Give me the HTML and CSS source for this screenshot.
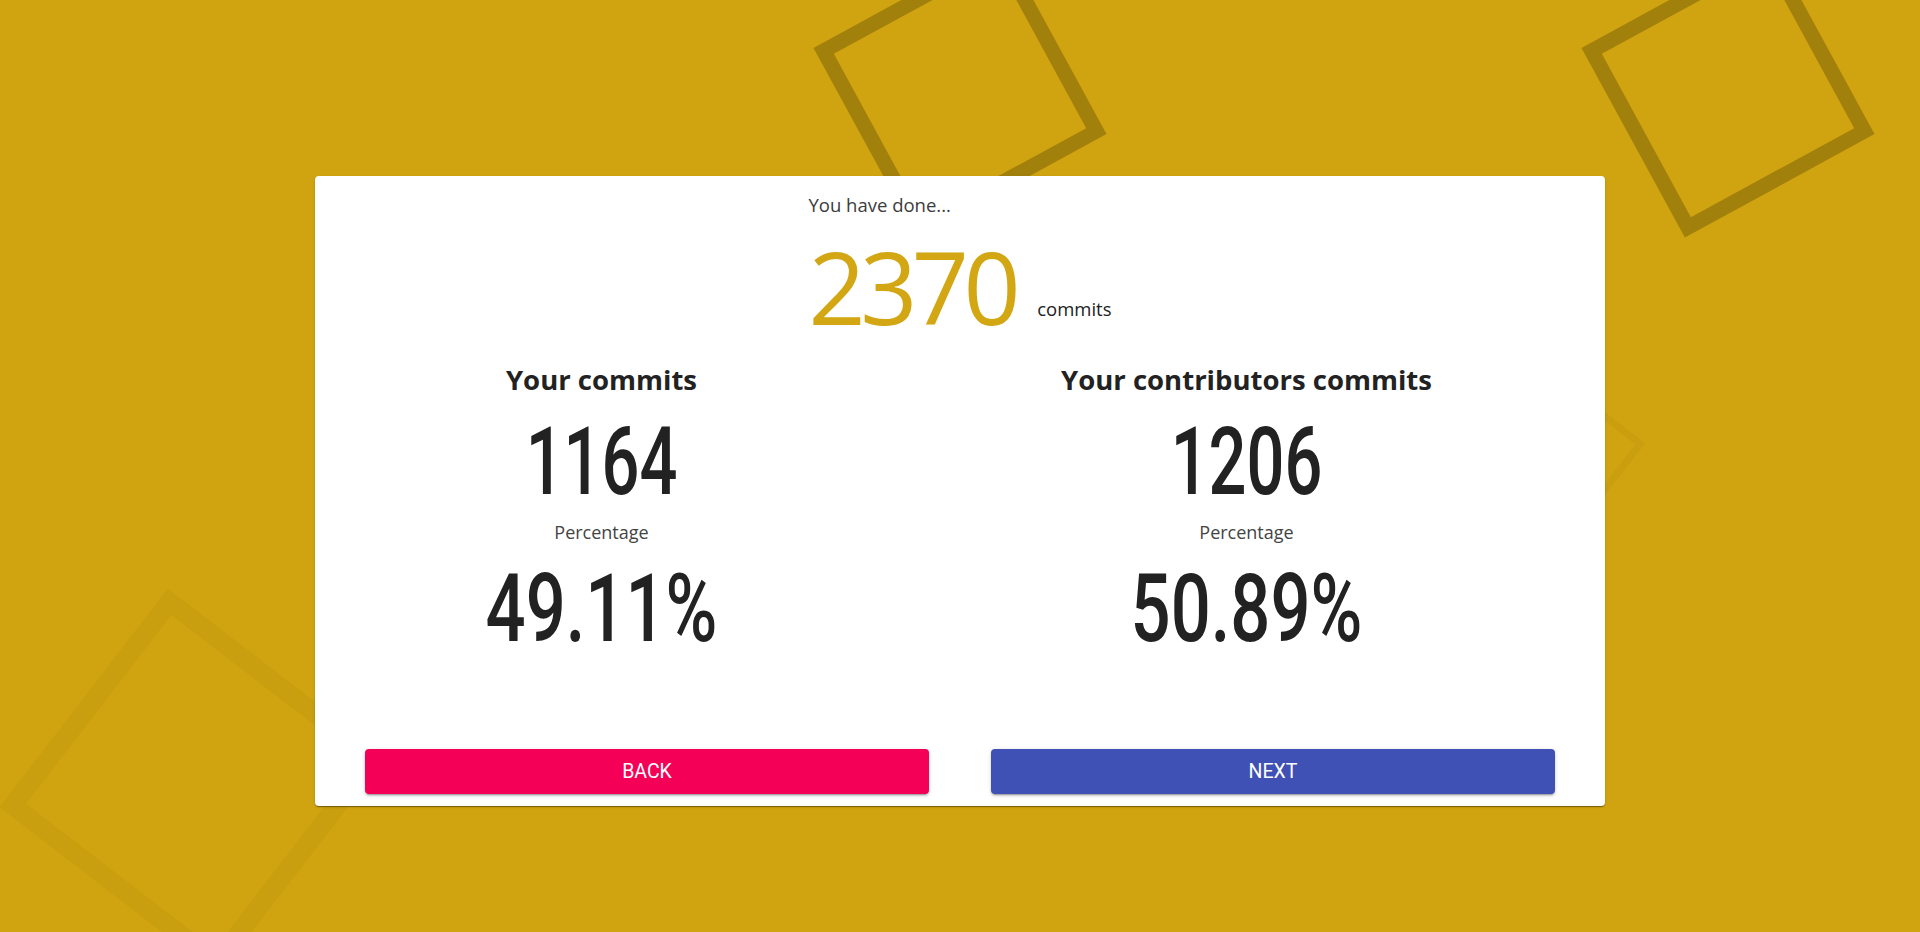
FILE: index.html
```html
<!DOCTYPE html>
<html lang="en">
<head>
<meta charset="utf-8">
<title>Commits</title>
<link rel="stylesheet" href="styles.css">
</head>
<body>
<div class="bg">
  <span class="sq sq-1"></span>
  <span class="sq sq-2"></span>
  <span class="sq sq-3"></span>
  <span class="sq sq-4"></span>
</div>
<main class="card">
  <div class="intro">
    <div class="intro-block">
      <div class="done">You have done...</div>
      <div class="total">
        <span class="total-num">2370</span>
        <span class="total-label">commits</span>
      </div>
    </div>
  </div>
  <div class="stats">
    <section class="col">
      <h2 class="col-title">Your commits</h2>
      <div class="big">1164</div>
      <div class="sub">Percentage</div>
      <div class="big big-pct">49.11%</div>
    </section>
    <section class="col">
      <h2 class="col-title">Your contributors commits</h2>
      <div class="big">1206</div>
      <div class="sub">Percentage</div>
      <div class="big big-pct">50.89%</div>
    </section>
  </div>
  <div class="actions">
    <button class="btn btn-back">Back</button>
    <button class="btn btn-next">Next</button>
  </div>
</main>
</body>
</html>
```
FILE: styles.css
```css
* { box-sizing: border-box; }
html, body { margin: 0; padding: 0; }
body {
  background: #d0a410;
  width: 1920px;
  height: 932px;
  overflow: hidden;
  position: relative;
  font-family: "Open Sans", "Noto Sans", sans-serif;
}
.bg {
  position: absolute;
  inset: 0;
  overflow: hidden;
  z-index: 0;
}
.sq {
  position: absolute;
  display: block;
  border-style: solid;
}
.sq-1 {
  left: 852px; top: -17px; width: 216px; height: 216px;
  border-width: 15px; border-color: rgba(0,0,0,0.22);
  transform: rotate(-28.6deg);
}
.sq-2 {
  left: 1620px; top: -17px; width: 216px; height: 216px;
  border-width: 15px; border-color: rgba(0,0,0,0.22);
  transform: rotate(-28.6deg);
}
.sq-3 {
  left: 55px; top: 644px; width: 276px; height: 276px;
  border-width: 19px; border-color: rgba(0,0,0,0.03);
  transform: rotate(37.6deg);
}
.sq-4 {
  left: 1525px; top: 402px; width: 100px; height: 100px;
  border-width: 7px; border-color: rgba(0,0,0,0.03);
  transform: rotate(38deg);
}
.card {
  position: relative;
  z-index: 1;
  width: 1290px;
  height: 630px;
  margin: 176px auto 0;
  background: #fff;
  border-radius: 4px;
  box-shadow: 0 2px 1px -1px rgba(0,0,0,.25), 0 1px 1px 0 rgba(0,0,0,.16), 0 1px 3px 0 rgba(0,0,0,.12);
  display: flex;
  flex-direction: column;
  padding: 15px 0 12px;
}
.intro {
  display: flex;
  justify-content: center;
}
.intro-block {
  display: flex;
  flex-direction: column;
  align-items: flex-start;
}
.done {
  font-size: 18.5px;
  line-height: 27.75px;
  color: #3c3c3c;
  margin-bottom: 17px;
}
.total {
  display: flex;
  align-items: flex-end;
}
.total-num {
  font-family: "Open Sans", sans-serif;
  font-weight: 400;
  font-size: 100px;
  line-height: 100px;
  letter-spacing: -5.5px;
  color: #d3a613;
}
.total-label {
  font-size: 18.5px;
  line-height: 27.75px;
  color: #222;
  margin: 0 0 13.5px 22px;
}
.stats {
  display: grid;
  grid-template-columns: 1fr 1fr;
  margin: 27.5px 36px 0 -36px;
}
.col {
  text-align: center;
}
.col-title {
  margin: 0;
  font-size: 27.5px;
  line-height: 33px;
  font-weight: 700;
  color: #222;
}
.big {
  font-family: Roboto, "Liberation Sans", sans-serif;
  font-weight: 500;
  font-size: 94px;
  line-height: 94px;
  color: #222;
  transform: scaleX(0.71);
  margin-top: 18.5px;
}
.big-pct {
  margin-top: 15.5px;
  transform: scaleX(0.75);
}
.sub {
  font-size: 18px;
  line-height: 27px;
  color: #444;
  margin-top: 10.3px;
}
.actions {
  margin-top: auto;
  display: flex;
  gap: 62px;
  padding: 0 50px;
}
.btn {
  flex: 1;
  height: 45px;
  border: 0;
  border-radius: 4px;
  color: #fff;
  font-family: Roboto, "Liberation Sans", sans-serif;
  font-size: 19.5px;
  font-weight: 400;
  text-transform: uppercase;
  box-shadow: 0 3px 1px -2px rgba(0,0,0,.2), 0 2px 2px 0 rgba(0,0,0,.14), 0 1px 5px 0 rgba(0,0,0,.12);
  cursor: pointer;
}
.btn-back { background: #f50057; }
.btn-next { background: #3f51b5; }
```
